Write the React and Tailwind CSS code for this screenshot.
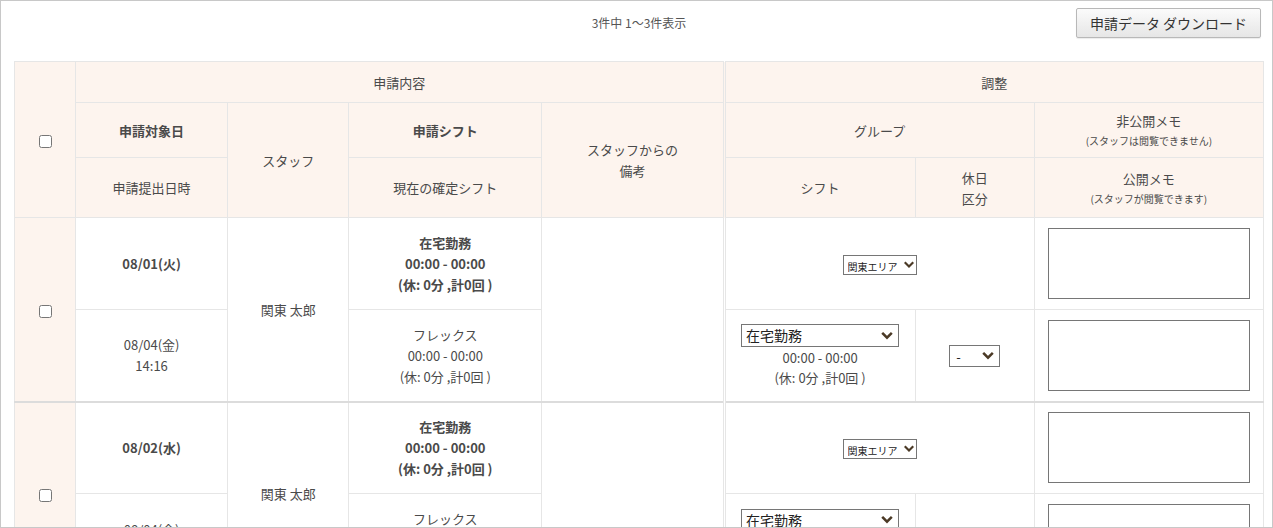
import React from 'react';

const FONT = { fontFamily: '"Noto Sans CJK JP", "Noto Sans", sans-serif' };

function Chevron({ className }) {
  return (
    <svg viewBox="0 0 10 8" className={className} fill="none">
      <path d="M1.5 2 L5 5.5 L8.5 2" stroke="#4b3a26" strokeWidth="2.2" strokeLinecap="square" />
    </svg>
  );
}

function Select({ value, className, textClass, chevClass }) {
  return (
    <span className={'relative inline-block align-middle ' + className}>
      <select
        defaultValue={value}
        className={'h-full w-full appearance-none border border-[#767676] bg-white text-[#222] outline-none ' + textClass}
      >
        <option>{value}</option>
      </select>
      <Chevron className={'pointer-events-none absolute top-1/2 -translate-y-1/2 ' + chevClass} />
    </span>
  );
}

function Memo() {
  return <textarea className="mx-auto block h-[71px] w-[202px] resize-none border border-[#767676] bg-white" />;
}

const cell = 'border border-[#e6e6e6] text-center align-middle';
const head = cell + ' bg-[#fdf4ee]';

function Record({ date, submitted, time, staff, first }) {
  return (
    <tbody className={first ? '' : 'border-t-2 border-[#dcdcdc]'}>
      <tr className="h-[92px]">
        <td rowSpan={2} className={head}>
          <input type="checkbox" className="h-[13px] w-[13px] align-middle" />
        </td>
        <td className={cell + ' font-bold'}>{date}</td>
        <td rowSpan={2} className={cell}>{staff}</td>
        <td className={cell + ' font-bold'}>
          在宅勤務<br />00:00 - 00:00<br />(休: 0分 ,計0回 )
        </td>
        <td rowSpan={2} className={cell + ' border-r-[3px] border-double'}></td>
        <td colSpan={2} className={cell}>
          <Select value="関東エリア" className="h-[20px] w-[74px]" textClass="pl-[4px] text-[10px]" chevClass="right-[3px] h-[8px] w-[10px]" />
        </td>
        <td className={cell}><Memo /></td>
      </tr>
      <tr className="h-[92px]">
        <td className={cell}>
          {submitted}<br />{time}
        </td>
        <td className={cell}>
          フレックス<br />00:00 - 00:00<br />(休: 0分 ,計0回 )
        </td>
        <td className={cell + ' leading-[21px]'}>
          <div className="flex flex-col items-center">
            <Select value="在宅勤務" className="mt-[2px] h-[23px] w-[158px]" textClass="pl-[4px] text-[14px]" chevClass="right-[6px] h-[9px] w-[12px]" />
            <div className="mt-[1px] leading-[20px]">00:00 - 00:00</div>
            <div className="leading-[20px]">(休: 0分 ,計0回 )</div>
          </div>
        </td>
        <td className={cell}>
          <Select value="-" className="h-[22px] w-[51px]" textClass="pl-[6px] text-[13px]" chevClass="right-[6px] h-[9px] w-[12px]" />
        </td>
        <td className={cell}><Memo /></td>
      </tr>
    </tbody>
  );
}

export default function App() {
  return (
    <div
      style={FONT}
      className="h-[528px] w-[1273px] overflow-hidden border border-[#c8c8c8] bg-white pl-[13px] pr-[8px] pt-[7px] text-[13px] leading-[21px] text-[#4a4a4a]"
    >
      {/* top bar */}
      <div className="mb-[23px] grid h-[30px] grid-cols-[1fr_auto_1fr] items-center">
        <div></div>
        <div className="pb-[1px] text-[12px] text-[#555]">3件中 1〜3件表示</div>
        <div className="flex justify-end pr-[3px]">
          <button className="h-[30px] w-[185px] rounded-[2px] border border-[#b8b8b8] bg-gradient-to-b from-[#fbfbfb] to-[#e6e6e6] text-[14px] text-[#333] shadow-[0_1px_1px_rgba(0,0,0,0.08)]">
            申請データ ダウンロード
          </button>
        </div>
      </div>

      <table className="w-[1250px] table-fixed border-collapse">
        <colgroup>
          <col className="w-[61px]" />
          <col className="w-[152px]" />
          <col className="w-[121px]" />
          <col className="w-[193px]" />
          <col className="w-[182px]" />
          <col className="w-[191px]" />
          <col className="w-[119px]" />
          <col className="w-[229px]" />
        </colgroup>
        <thead>
          <tr className="h-[41px]">
            <th rowSpan={3} className={head}>
              <input type="checkbox" className="h-[13px] w-[13px] align-middle" />
            </th>
            <th colSpan={4} className={head + ' border-r-[3px] border-double font-normal'}>申請内容</th>
            <th colSpan={3} className={head + ' font-normal'}>調整</th>
          </tr>
          <tr className="h-[55px]">
            <th className={head + ' font-bold'}>申請対象日</th>
            <th rowSpan={2} className={head + ' font-normal'}>スタッフ</th>
            <th className={head + ' font-bold'}>申請シフト</th>
            <th rowSpan={2} className={head + ' border-r-[3px] border-double font-normal'}>
              スタッフからの<br />備考
            </th>
            <th colSpan={2} className={head + ' font-normal'}>グループ</th>
            <th className={head + ' font-normal leading-[19px]'}>
              非公開メモ<br />
              <span className="text-[10px] leading-[14px]">(スタッフは閲覧できません)</span>
            </th>
          </tr>
          <tr className="h-[60px]">
            <th className={head + ' font-normal'}>申請提出日時</th>
            <th className={head + ' font-normal'}>現在の確定シフト</th>
            <th className={head + ' font-normal'}>シフト</th>
            <th className={head + ' font-normal'}>
              休日<br />区分
            </th>
            <th className={head + ' font-normal leading-[19px]'}>
              公開メモ<br />
              <span className="text-[10px] leading-[14px]">(スタッフが閲覧できます)</span>
            </th>
          </tr>
        </thead>
        <Record first date="08/01(火)" submitted="08/04(金)" time="14:16" staff="関東 太郎" />
        <Record date="08/02(水)" submitted="08/04(金)" time="14:16" staff="関東 太郎" />
      </table>
    </div>
  );
}
